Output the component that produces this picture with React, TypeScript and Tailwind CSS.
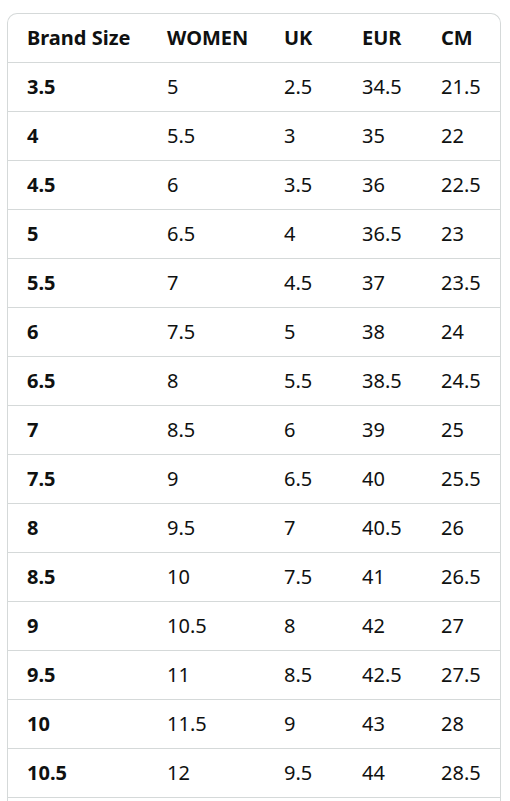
import React from "react";

const rows: string[][] = [
  ["3.5", "5", "2.5", "34.5", "21.5"],
  ["4", "5.5", "3", "35", "22"],
  ["4.5", "6", "3.5", "36", "22.5"],
  ["5", "6.5", "4", "36.5", "23"],
  ["5.5", "7", "4.5", "37", "23.5"],
  ["6", "7.5", "5", "38", "24"],
  ["6.5", "8", "5.5", "38.5", "24.5"],
  ["7", "8.5", "6", "39", "25"],
  ["7.5", "9", "6.5", "40", "25.5"],
  ["8", "9.5", "7", "40.5", "26"],
  ["8.5", "10", "7.5", "41", "26.5"],
  ["9", "10.5", "8", "42", "27"],
  ["9.5", "11", "8.5", "42.5", "27.5"],
  ["10", "11.5", "9", "43", "28"],
  ["10.5", "12", "9.5", "44", "28.5"],
];

const headers = ["Brand Size", "WOMEN", "UK", "EUR", "CM"];
const widths = ["w-[140px]", "w-[117px]", "w-[78px]", "w-[79px]", "w-[79px]"];

export default function App() {
  return (
    <div className="bg-white min-h-screen pt-[13px] pl-[7px] pr-[9px]" style={{ fontFamily: '"Noto Sans", "Open Sans", sans-serif' }}>
      <div className="border-x border-t border-[#d5d9d9] rounded-t-[10px] overflow-hidden text-[#0f1111] text-[20px]">
        <div className="flex h-[48px] items-center">
          {headers.map((h, i) => (
            <div key={h} className={`${widths[i]} shrink-0 pl-[19px] font-bold`}>{h}</div>
          ))}
        </div>
        {rows.map((r, ri) => (
          <div key={ri} className="flex h-[49px] items-center border-t border-[#d5d9d9]">
            {r.map((c, i) => (
              <div key={i} className={`${widths[i]} shrink-0 pl-[19px] ${i === 0 ? "font-bold" : ""}`}>{c}</div>
            ))}
          </div>
        ))}
        <div className="h-[20px] border-t border-[#d5d9d9]" />
      </div>
    </div>
  );
}
